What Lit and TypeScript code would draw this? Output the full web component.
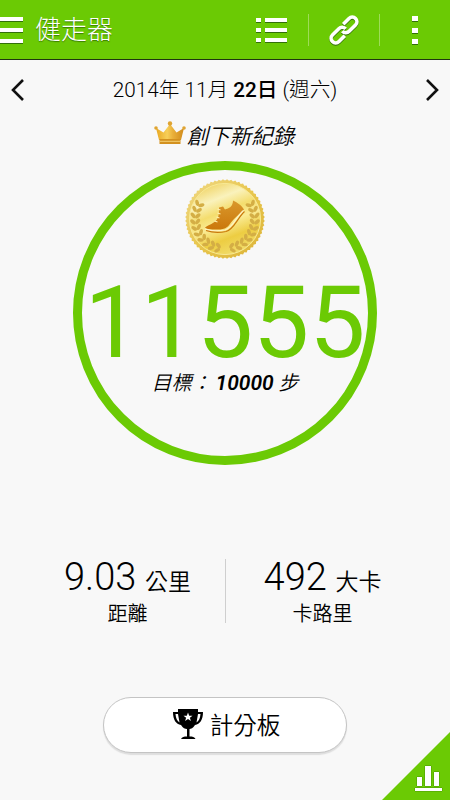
import { html, svg, LitElement, css } from 'lit';
import { customElement, property } from 'lit/decorators.js';

@customElement('app-header')
export class AppHeader extends LitElement {
  static styles = [
    css`
      :host {
        display: block;
      }
      .bar {
        box-sizing: border-box;
        height: 60px;
        display: flex;
        align-items: center;
        background-color: #6bca04;
        border-bottom: 1px solid #1f3510;
        color: #fff;
      }
      .title {
        flex: 1;
        margin-left: 12px;
        font-size: 26px;
        font-weight: 300;
        line-height: 60px;
        white-space: nowrap;
        text-shadow: 0 1px 1px #3b7a00;
      }
      .divider {
        width: 1px;
        height: 32px;
        background-color: #9edc58;
      }
      .action {
        display: flex;
        justify-content: center;
      }
      .list {
        width: 73px;
      }
      .link {
        width: 70px;
      }
      .more {
        width: 70px;
      }
      svg {
        display: block;
        filter: drop-shadow(0 1px 0 #33700a);
      }
    `
  ];

  render() {
    return html`
      <div class='bar'>
        <svg width='23' height='28' fill='#fff'>
          <path d='M0 1h23v4H0zM0 12h23v4H0zM0 23h23v4H0z' />
        </svg>
        <div class='title'>健走器</div>
        <div class='action list'>
          <svg width='32' height='26' fill='#fff'>
            <path d='M0 1h5v4H0zM9 1h22v4H9zM0 11h5v4H0zM9 11h22v4H9zM0 21h5v4H0zM9 21h22v4H9z' />
          </svg>
        </div>
        <div class='divider'></div>
        <div class='action link'>
          <svg width='32' height='32' viewBox='0 0 32 32' fill='none' stroke='#fff' stroke-width='3.6'>
            <g transform='rotate(-45 16 16)'>
              <path d='M12.5 20.6H4.3a4.6 4.6 0 0 1 0-9.2h9a4.6 4.6 0 0 1 4.6 5' />
              <path d='M19.500 11.400h8.200a4.600 4.600 0 0 1 0 9.200h-9a4.600 4.600 0 0 1-4.600-5' />
            </g>
          </svg>
        </div>
        <div class='divider'></div>
        <div class='action more'>
          <svg width='6' height='30' fill='#fff'>
            <path d='M0 1h6v5H0zM0 13h6v5H0zM0 24h6v5H0z' />
          </svg>
        </div>
      </div>
    `;
  }
}

@customElement('step-medal')
export class StepMedal extends LitElement {
  static styles = [
    css`
      :host,
      svg {
        display: block;
      }
    `
  ];

  // scalloped outline of the coin
  edge() {
    const points: string[] = [];
    for (let i = 0; i < 120; i++) {
      const r = i % 2 ? 39.8 : 38.4;
      const a = (i * Math.PI) / 60;
      points.push(`${(40 + r * Math.cos(a)).toFixed(2)},${(40 + r * Math.sin(a)).toFixed(2)}`);
    }
    return points.join(' ');
  }

  leaves() {
    return [0, 1, 2, 3, 4, 5, 6, 7, 8, 9].map((i) => {
      const a = 104 + i * 11.8;
      return svg`
        <g transform='rotate(${a} 40 40) translate(70 40)'>
          <ellipse cx='-2.6' cy='0' rx='3.2' ry='1.8' transform='rotate(-48 -2.6 0)' />
          <ellipse cx='2.2' cy='0' rx='3.2' ry='1.8' transform='rotate(48 2.2 0)' />
        </g>`;
    });
  }

  render() {
    return html`
      <svg width='80' height='80' viewBox='0 0 80 80'>
        <defs>
          <linearGradient id='rim' x1='0' y1='0' x2='1' y2='1'>
            <stop offset='0' stop-color='#f0d987' />
            <stop offset='.5' stop-color='#e8c64e' />
            <stop offset='1' stop-color='#dbb236' />
          </linearGradient>
          <linearGradient id='face' x1='.3' y1='0' x2='.7' y2='1'>
            <stop offset='0' stop-color='#f0d466' />
            <stop offset='.22' stop-color='#faf2bc' />
            <stop offset='.4' stop-color='#f4dd6e' />
            <stop offset='.55' stop-color='#faeb94' />
            <stop offset='.75' stop-color='#edcd42' />
            <stop offset='1' stop-color='#f2de70' />
          </linearGradient>
          <linearGradient id='shoe' x1='0' y1='0' x2='0' y2='1'>
            <stop offset='0' stop-color='#d9982c' />
            <stop offset='1' stop-color='#cb780c' />
          </linearGradient>
        </defs>
        <polygon points=${this.edge()} fill='url(#rim)' />
        <circle cx='40' cy='40' r='35.6' fill='url(#face)' stroke='#f8e994' stroke-width='1' />
        <g fill='#d4ae45'>${this.leaves()}</g>
        <g fill='#d4ae45' transform='matrix(-1 0 0 1 80 0)'>${this.leaves()}</g>
        <path d='M20 48.500c4-3 9-4 12-8 2-3 2-7 2-12l4-1c1 1 1 2 2 3 4-1 8-3 8-9 4 2 8 4 11 9-5 5-9 8-13 13-4 6-7 7-13 7-6 0-11 0-13-2z' fill='url(#shoe)' />
        <path d='M20 50c5 2 14 2 20 1 8-2 10-12 18.500-19.500' fill='none' stroke='#fff3c4' stroke-width='1.2' />
        <path d='M21 51.500c6 2 15 2 20 1 8-2 11-13 18.500-20' fill='none' stroke='#c9780c' stroke-width='1.2' />
        <path d='M32.500 30l3 1M32.500 34l3 1M31.500 38l3 1M29.500 42l3 1' stroke='#fff0b0' stroke-width='1.2' />
      </svg>
    `;
  }
}

@customElement('stat-item')
export class StatItem extends LitElement {
  @property() value = '';
  @property() unit = '';
  @property() label = '';

  static styles = [
    css`
      :host {
        display: block;
        text-align: center;
        white-space: nowrap;
      }
      .amount {
        height: 41px;
        line-height: 37px;
        font-size: 38px;
        font-weight: 300;
      }
      .unit {
        font-size: 23px;
        font-weight: 350;
        margin-left: 3px;
      }
      .label {
        font-size: 20px;
        font-weight: 350;
        line-height: 28px;
      }
    `
  ];

  render() {
    return html`
      <div class='amount'>${this.value}<span class='unit'> ${this.unit}</span></div>
      <div class='label'>${this.label}</div>
    `;
  }
}

@customElement('app-root')
export default class AppRoot extends LitElement {
  static styles = [
    css`
      :host {
        display: flex;
        flex-direction: column;
        position: relative;
        width: 450px;
        height: 800px;
        overflow: hidden;
        background-color: #f8f8f8;
        color: #000;
        font-family: Roboto, 'Noto Sans CJK TC', sans-serif;
      }
      svg {
        display: block;
      }
      .date-row {
        box-sizing: border-box;
        height: 60px;
        padding: 0 10px;
        display: flex;
        align-items: center;
        justify-content: space-between;
      }
      .date {
        font-size: 20.7px;
        font-weight: 300;
        line-height: 26px;
        white-space: nowrap;
      }
      .date b {
        font-weight: 500;
      }
      .record {
        height: 32px;
        display: flex;
        align-items: center;
        justify-content: center;
        gap: 1px;
        padding-right: 2px;
        font-size: 21.5px;
        font-weight: 350;
        font-style: italic;
        line-height: 32px;
      }
      .record span {
        margin-top: 2px;
      }
      .record svg {
        margin-top: -6px;
      }
      .ring {
        box-sizing: border-box;
        width: 304px;
        height: 304px;
        margin: 9px auto 0;
        padding-top: 9px;
        border: 9px solid #6bca04;
        border-radius: 50%;
        display: flex;
        flex-direction: column;
        align-items: center;
      }
      .steps {
        height: 100px;
        line-height: 100px;
        margin-top: 14px;
        font-size: 100px;
        font-weight: 400;
        color: #6bca04;
      }
      .goal {
        font-size: 20px;
        font-weight: 350;
        line-height: 28px;
        margin-top: -4px;
        font-style: italic;
        white-space: nowrap;
      }
      .goal b {
        font-weight: 600;
        font-size: 21px;
        margin-left: 4px;
      }
      .stats {
        margin-top: 94px;
        display: grid;
        grid-template-columns: 194px 1px 194px;
        grid-template-rows: 64px;
        justify-content: center;
      }
      .separator {
        height: 64px;
        background-color: #cfcfcf;
      }
      .board {
        box-sizing: border-box;
        width: 244px;
        height: 56px;
        margin: 74px auto 0;
        padding: 0 0 2px 3px;
        display: flex;
        align-items: center;
        justify-content: center;
        gap: 7px;
        background-color: #fff;
        border: 1px solid #c4c4c4;
        border-radius: 28px;
        box-shadow: 0 2px 1px #dedede;
        font-size: 23.5px;
        font-weight: 350;
      }
      .corner {
        position: absolute;
        right: 0;
        bottom: 0;
      }
    `
  ];

  render() {
    return html`
      <app-header></app-header>
      <div class='date-row'>
        <svg width='14' height='22' fill='none' stroke='#111' stroke-width='2.6'>
          <path d='M13 1L3 11l10 10' />
        </svg>
        <div class='date'>2014年 11月 <b>22日</b> (週六)</div>
        <svg width='14' height='22' fill='none' stroke='#111' stroke-width='2.6'>
          <path d='M1 1l10 10L1 21' />
        </svg>
      </div>
      <div class='record'>
        <svg width='32' height='24' viewBox='0 0 32 24'>
          <defs>
            <linearGradient id='gold' x1='0' y1='0' x2='1' y2='0'>
              <stop offset='0' stop-color='#e8a722' />
              <stop offset='.4' stop-color='#f7cf58' />
              <stop offset='.6' stop-color='#eab03a' />
              <stop offset='1' stop-color='#d08a1a' />
            </linearGradient>
          </defs>
          <path d='M5 19L2 7l7.500 4.500L16 3l6.500 8.500L30 7l-3 12z' fill='url(#gold)' />
          <path d='M5.500 18h21v5h-21z' fill='#d3911f' />
          <path d='M6 20.300h20' stroke='#fbe08c' stroke-width='.8' />
          <g fill='#dfa432'>
            <circle cx='2' cy='7' r='1.800' />
            <circle cx='16' cy='2.500' r='2.200' />
            <circle cx='30' cy='7' r='1.800' />
          </g>
        </svg>
        <span>創下新紀錄</span>
      </div>
      <div class='ring'>
        <step-medal></step-medal>
        <div class='steps'>11555</div>
        <div class='goal'>目標：<b>10000</b> 步</div>
      </div>
      <div class='stats'>
        <stat-item value='9.03' unit='公里' label='距離'></stat-item>
        <div class='separator'></div>
        <stat-item value='492' unit='大卡' label='卡路里'></stat-item>
      </div>
      <div class='board'>
        <svg width='30' height='31' viewBox='0 0 30 31'>
          <path d='M5 0h20v3h5c0 8-3 12-8 13-2 3-4 4-5.500 4v7.500c3 0 5 .5 6 2.500H8c1-2 3-2.500 6-2.500V20c-2 0-4-1-6-4-5-1-8-5-8-13h5z' />
          <path d='M2.500 5c.3 4 1.500 7 4 8.500L5 5zM27.500 5c-.3 4-1.500 7-4 8.500L25 5z' fill='#fff' />
          <path d='M15 3.500l1.200 3.200h3.300l-2.600 2 1 3.300-2.900-2-2.900 2 1-3.300-2.600-2h3.300z' fill='#fff' />
        </svg>
        <span>計分板</span>
      </div>
      <svg class='corner' width='68' height='68'>
        <path d='M68 0v68H0z' fill='#6bca04' />
        <path d='M35 45h5v9h-5zM43 34h6v20h-6zM52 40h5v14h-5zM33 56h27v3H33z' fill='#fff' stroke='#4a9a00' stroke-width='1' paint-order='stroke' />
      </svg>
    `;
  }
}
